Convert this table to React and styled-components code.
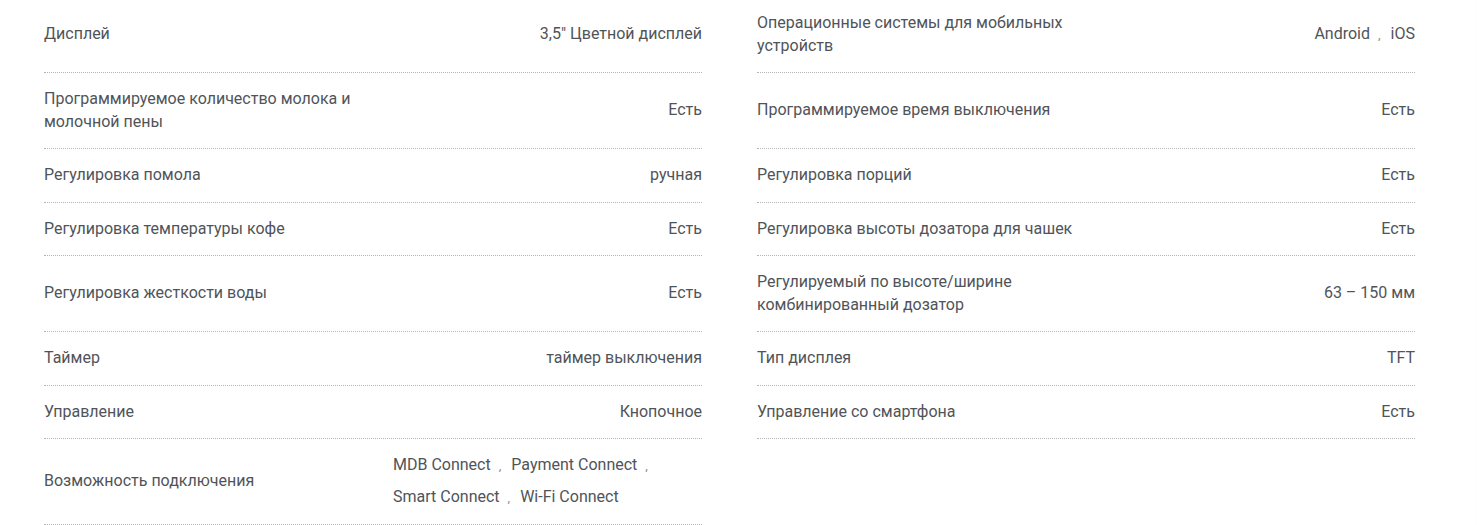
import React from "react";
import styled, { createGlobalStyle } from "styled-components";

const Global = createGlobalStyle`
  html, body { margin: 0; padding: 0; background: #fff; }
  body {
    font-family: Roboto, "Noto Sans", "Liberation Sans", sans-serif;
    font-size: 16px;
    line-height: 22.5px;
    color: #505459;
    overflow: hidden;
  }
`;

const Page = styled.div`
  position: relative;
  padding: 0 44px;
  box-shadow: inset 0 2px 2px -1px #ececec;
`;

const Grid = styled.div`
  display: grid;
  grid-template-columns: 658px 658px;
  column-gap: 55px;
  margin-top: -3px;
`;

const Item = styled.div`
  display: grid;
  grid-template-columns: 349px 1fr;
  align-items: center;
  padding: 15px 0;
  border-bottom: 1px dotted #b5b5b5;
`;

const Label = styled.div`
  padding-right: 20px;
`;

const Value = styled.div`
  text-align: right;
`;

const List = styled.div`
  display: flex;
  flex-wrap: wrap;
  justify-content: ${(p) => (p.$left ? "flex-start" : "flex-end")};
  row-gap: 9.5px;
`;

const ListItem = styled.span`
  white-space: nowrap;
  line-height: 22.5px;
`;

const Sep = styled.span`
  display: inline-block;
  margin: 0 10px 0 8px;
  color: #8a8e93;
  font-size: 13px;
  line-height: 1;
  vertical-align: baseline;
`;

const Empty = styled.div``;

const rows = [
  [
    ["Дисплей", "3,5\" Цветной дисплей"],
    ["Операционные системы для мобильных устройств", ["Android", "iOS"]],
  ],
  [
    ["Программируемое количество молока и молочной пены", "Есть"],
    ["Программируемое время выключения", "Есть"],
  ],
  [
    ["Регулировка помола", "ручная"],
    ["Регулировка порций", "Есть"],
  ],
  [
    ["Регулировка температуры кофе", "Есть"],
    ["Регулировка высоты дозатора для чашек", "Есть"],
  ],
  [
    ["Регулировка жесткости воды", "Есть"],
    ["Регулируемый по высоте/ширине комбинированный дозатор", "63 – 150 мм"],
  ],
  [
    ["Таймер", "таймер выключения"],
    ["Тип дисплея", "TFT"],
  ],
  [
    ["Управление", "Кнопочное"],
    ["Управление со смартфона", "Есть"],
  ],
  [
    [
      "Возможность подключения",
      ["MDB Connect", "Payment Connect", "Smart Connect", "Wi-Fi Connect"],
      true,
    ],
    null,
  ],
];

function Spec({ spec }) {
  if (!spec) return <Empty />;
  const [label, value, left] = spec;
  return (
    <Item>
      <Label>{label}</Label>
      {Array.isArray(value) ? (
        <List $left={left}>
          {value.map((v, i) => (
            <ListItem key={v}>
              {v}
              {i < value.length - 1 && <Sep>,</Sep>}
            </ListItem>
          ))}
        </List>
      ) : (
        <Value>{value}</Value>
      )}
    </Item>
  );
}

export default function App() {
  return (
    <>
      <Global />
      <Page>
        <Grid>
          {rows.map((r, i) => (
            <React.Fragment key={i}>
              <Spec spec={r[0]} />
              <Spec spec={r[1]} />
            </React.Fragment>
          ))}
        </Grid>
      </Page>
    </>
  );
}
